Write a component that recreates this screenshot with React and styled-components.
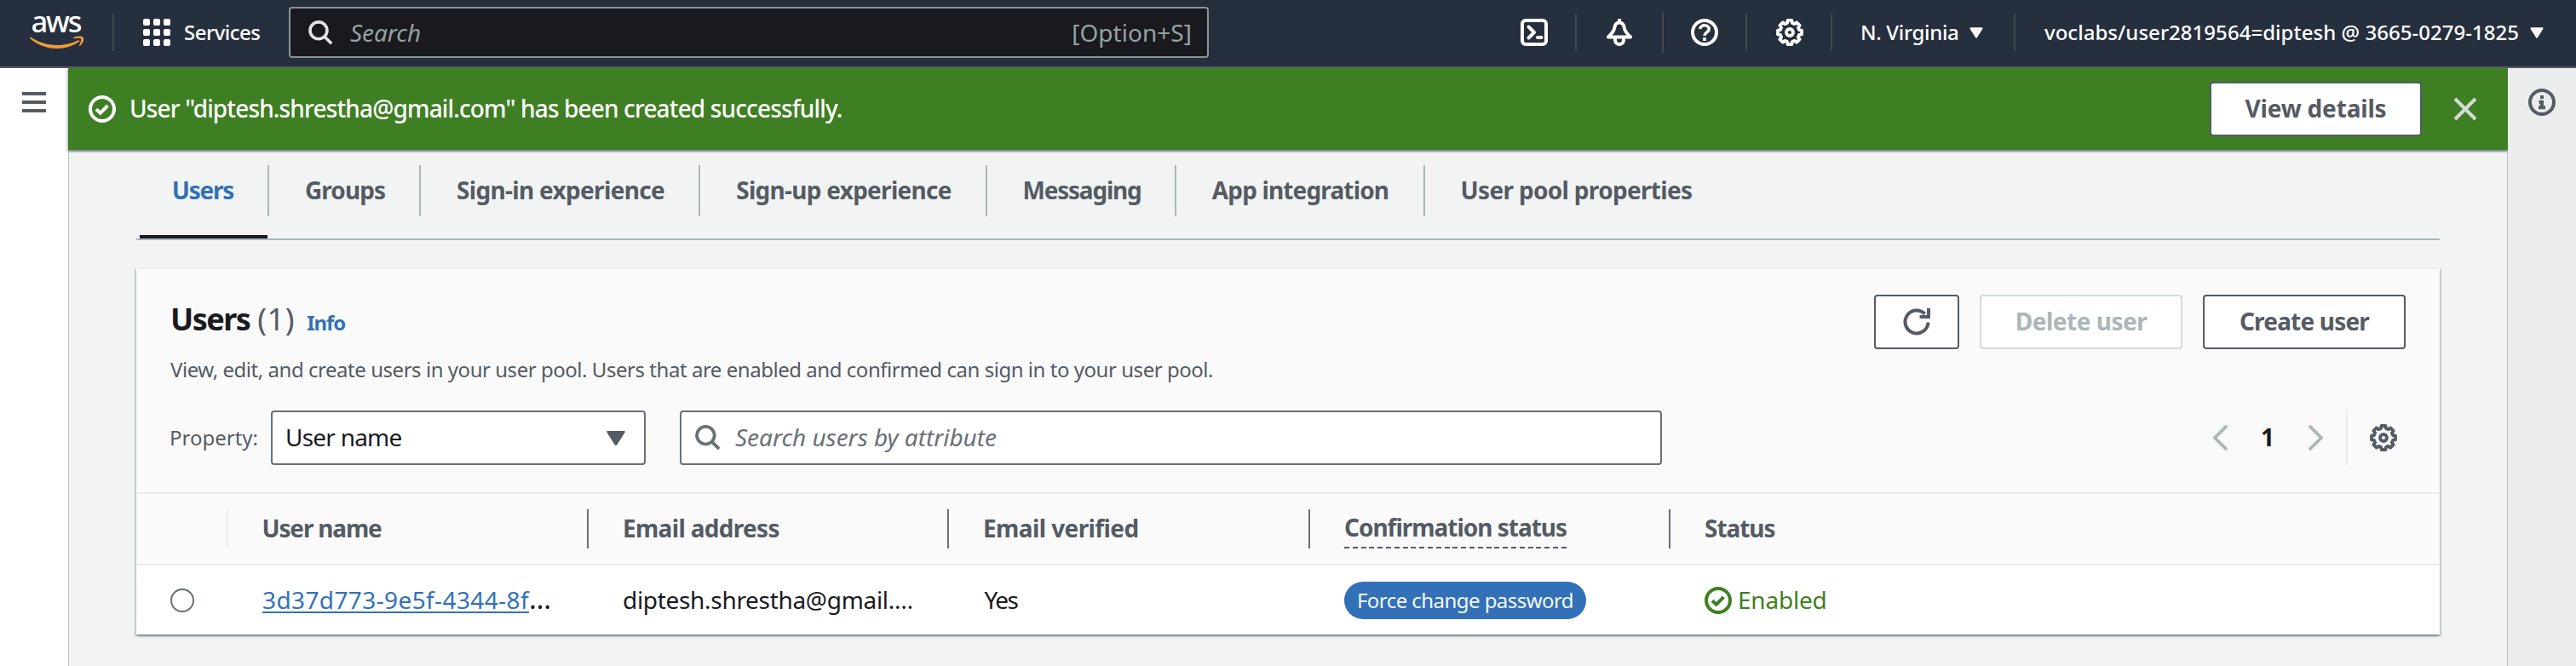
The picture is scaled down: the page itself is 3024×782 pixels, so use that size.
import React from "react";
import styled, { createGlobalStyle } from "styled-components";

const c = {
  nav: "#262f3e", ink: "#1a191f", grey: "#545b64", mid: "#687078", line: "#aab7b8",
  soft: "#eaeded", blue: "#3271b7", green: "#3f7f23", page: "#f1f4f3",
};

const GlobalStyle = createGlobalStyle`
  * { box-sizing: border-box; }
  body { margin: 0; background: ${c.page}; font-family: "Noto Sans", "Open Sans", sans-serif; color: ${c.ink}; }
  svg { display: block; flex: none; }
`;

const Text = styled.span`
  display: block;
  white-space: pre;
  font-size: ${(p) => p.$size || 28}px;
  line-height: ${(p) => p.$lh || 40}px;
  font-weight: ${(p) => p.$weight || 400};
  font-style: ${(p) => (p.$italic ? "italic" : "normal")};
  letter-spacing: ${(p) => p.$ls || 0}px;
  color: ${(p) => p.$color || "inherit"};
  margin-left: ${(p) => p.$x || 0}px;
  padding-bottom: ${(p) => (p.$up || 0) * 2}px;
`;

/* Top navigation */
const Header = styled.header`
  height: 80px; padding: 0 38px 2px 34px; background: ${c.nav};
  border-bottom: 2px solid ${c.grey}; display: flex; align-items: center; color: #fff;
`;
const NavDivider = styled.i`
  flex: none; width: 2px; height: ${(p) => (p.$tall ? 48 : 44)}px; background: #414750;
  margin: 0 ${(p) => p.$r}px 0 ${(p) => p.$l}px;
`;
const GridIcon = styled.div`
  display: grid; grid-template-columns: repeat(3, 8px); grid-auto-rows: 8px; gap: 4px; margin-right: 16px;
  i { background: #fff; border-radius: 2px; }
`;
const NavSearch = styled.div`
  width: 1080px; height: 60px; margin-left: auto; padding: 0 18px 0 21px;
  border: 2px solid #879596; border-radius: 4px; background: ${c.ink}; display: flex; align-items: center;
`;
const NavLeft = styled.div`display: flex; align-items: center; width: 1385px;`;
const NavRight = styled.div`display: flex; align-items: center; flex: 1; padding-left: 366px;`;
const Region = styled.div`display: flex; align-items: center; justify-content: space-between; width: 144px;`;
const Spacer = styled.div`flex: 1;`;

/* Page shell */
const Shell = styled.div`display: grid; grid-template-columns: 80px 1fr 80px; height: 702px;`;
const LeftRail = styled.aside`background: #fff; padding: 28px 26px;`;
const RightRail = styled.aside`background: #ebedec; padding: 24px;`;
const Burger = styled.div`
  display: grid; gap: 6px;
  i { width: 28px; height: 4px; background: ${c.grey}; }
`;
const Main = styled.main`box-shadow: inset 1px 0 0 #bcc3c4, inset -1px 0 0 #bcc3c4;`;
const raised = `box-shadow: 0 2px 2px 0 rgba(0,28,36,.3), 2px 2px 2px 0 rgba(0,28,36,.15), -2px 2px 2px 0 rgba(0,28,36,.15);`;
const Banner = styled.div`
  height: 96px; background: ${c.green}; color: #fff; display: flex; align-items: center; padding: 0 36px 0 24px;
  ${raised}
`;
const Content = styled.div`padding: 18px 80px 0;`;

/* Tabs */
const TabBar = styled.nav`display: flex; height: 88px; padding-left: 4px; border-bottom: 2px solid ${c.line};`;
const Tab = styled.div`
  width: ${(p) => p.$w}px; display: flex; flex-direction: column; justify-content: space-between;
  color: ${(p) => (p.$on ? c.blue : c.grey)};
`;
const TabLabel = styled.div`
  height: 60px; display: flex; align-items: center; justify-content: center;
  border-right: 2px solid ${(p) => (p.$last ? "transparent" : c.line)};
`;
const TabMark = styled.i`height: 4px; margin-right: 2px; background: ${(p) => (p.$on ? c.ink : "transparent")};`;

/* Card */
const Card = styled.section`margin-top: 32px; background: #fff; border-top: 2px solid ${c.soft}; ${raised}`;
const CardHead = styled.div`background: #fafafa; padding: 30px 40px 32px; border-bottom: 2px solid ${c.soft};`;
const TitleRow = styled.div`display: flex; height: 64px; margin-bottom: 6px;`;
const Title = styled.div`display: flex; align-items: baseline; flex: 1; height: 58px;`;
const FilterRow = styled.div`display: flex; align-items: center; height: 64px; margin-top: 30px;`;
const Button = styled.button`
  width: ${(p) => p.$w}px; height: 64px; margin: 0 0 0 ${(p) => p.$gap || 0}px; padding: 0; font-family: inherit;
  display: flex; align-items: center; justify-content: center; background: #fff;
  border: 2px solid ${(p) => (p.disabled ? "#d5dbdb" : c.grey)}; border-radius: 4px;
  color: ${(p) => (p.disabled ? c.line : c.grey)};
`;
const CloseButton = styled.button`
  margin: 0 0 0 37px; padding: 0; border: 0; background: none; color: #d5dbdb;
`;
const Field = styled.div`
  width: ${(p) => p.$w}px; height: 64px; margin-left: ${(p) => p.$gap}px; padding: 0 ${(p) => p.$pr || 0}px 0 ${(p) => p.$pl}px;
  background: #fff; border: 2px solid ${c.mid}; border-radius: 4px;
  display: flex; align-items: center; justify-content: space-between;
`;
const Inline = styled.div`display: flex; align-items: center; gap: ${(p) => p.$gap || 0}px;`;
const Pager = styled.div`display: flex; align-items: center; margin-left: auto; padding-right: 10px;`;
const PageNumber = styled(Text)`margin: 0 39px 0 38px;`;
const PagerLine = styled.i`width: 2px; height: 64px; background: ${c.soft}; margin: 0 26px 0 25px;`;

/* Table */
const Row = styled.div`
  display: grid; grid-template-columns: 108px 423px 423px 424px 423px 1fr; align-items: center;
  height: ${(p) => (p.$head ? 84 : 81)}px;
  background: ${(p) => (p.$head ? "#fafafa" : "#fff")};
  border-bottom: ${(p) => (p.$head ? `2px solid ${c.soft}` : "0")};
`;
const Cell = styled.div`
  height: 46px; padding-left: 40px; display: flex; align-items: center;
  border-right: 2px solid ${(p) => p.$line || "transparent"};
`;
const Radio = styled.i`width: 28px; height: 28px; border: 2px solid ${c.mid}; border-radius: 50%; background: #fff;`;
const Link = styled(Text)`
  color: ${c.blue}; text-decoration: underline; text-decoration-thickness: 2px;
  text-underline-offset: 3px; text-decoration-skip-ink: none;
`;
const Hint = styled.div`
  height: 41px; margin-top: 5px;
  background: repeating-linear-gradient(90deg, ${c.grey} 0 6px, transparent 6px 9.8px) left bottom / 100% 2px no-repeat;
`;
const Badge = styled.div`
  width: 284px; height: 44px; border-radius: 22px; background: ${c.blue}; color: #f5f8fb;
  display: flex; align-items: center; justify-content: center;
`;

/* Icons */
const Svg = ({ size = 32, sw = 4, children, ...rest }) => (
  <svg width={size} height={size} viewBox="0 0 32 32" fill="none" stroke="currentColor" strokeWidth={sw} {...rest}>{children}</svg>
);

const gearPath = (() => {
  const pts = [];
  for (let i = 0; i < 8; i++) {
    [[-15, 11.4], [-10, 14.2], [10, 14.2], [15, 11.4]].forEach(([d, r]) => {
      const a = ((i * 45 + d) * Math.PI) / 180;
      pts.push(`${(16 + r * Math.sin(a)).toFixed(2)} ${(16 - r * Math.cos(a)).toFixed(2)}`);
    });
  }
  return `M${pts.join("L")}Z`;
})();
const Gear = (p) => <Svg sw={3.8} strokeLinejoin="round" {...p}><path d={gearPath} /><circle cx="16" cy="16" r="4" /></Svg>;
const CheckCircle = (p) => <Svg {...p}><circle cx="16" cy="16" r="14" /><path d="M9 16.2l4.8 4.6 8.6-8.8" /></Svg>;
const SearchIcon = ({ size = 28, ...p }) => (
  <Svg size={size} {...p}><circle cx="13.2" cy="13" r="11" /><path d="M21 21l9 9" /></Svg>
);
const Caret = () => (
  <svg width="16" height="13" viewBox="0 0 16 12" preserveAspectRatio="none" fill="currentColor" stroke="currentColor" strokeWidth="2" strokeLinejoin="round">
    <path d="M1.5 1.2h13L8 10.8z" />
  </svg>
);
const SelectCaret = () => (
  <svg width="22" height="17" viewBox="0 0 22 17" fill={c.grey}>
    <path d="M1.5 0h19c1.2 0 1.6 1 .9 2L12.5 16c-.8 1.300-2.200 1.300-3 0L.6 2C-.1 1 .3 0 1.500 0z" />
  </svg>
);
const Chevron = ({ flip }) => (
  <svg width="20" height="32" viewBox="0 0 20 32" fill="none" stroke={c.line} strokeWidth="3.8">
    <path d={flip ? "M2 2l14 14-14 14" : "M18 2L4 16l14 14"} />
  </svg>
);
const AwsLogo = () => (
  <svg width="66" height="76" viewBox="34 0 66 76">
    <text x="36.5" y="38" fill="#fff" fontSize="34.5" fontWeight="500" textLength="60" lengthAdjust="spacing">aws</text>
    <g fill="#ef9b38">
      <path d="M36 43.5C44 49 55 53 67 53c9 0 18-2.500 24.500-5.500 1.500-.7 2.500.7 1.300 1.500C86 54 76 57 67 57c-13 0-24-5-31.500-11.800-.7-.8-.5-2.200.5-1.700z" />
      <path d="M97.500 43.800c-1.500-2-8.500-1.300-11 .2-1 .8-.5 1.300.5 1.200 2.500-.4 7-.9 8 .4s-1 5.400-2 7.600c-.3.800.4 1.100 1.200.4 3.800-3.100 4.800-8.100 3.300-9.800z" />
    </g>
  </svg>
);

const tabs = [
  ["Users", 152, -1.24, -2], ["Groups", 178, -0.93, 2], ["Sign-in experience", 328, -0.68, 2], ["Sign-up experience", 337, -0.73, 2],
  ["Messaging", 222, -1.22, 2], ["App integration", 292, -0.85, 1], ["User pool properties", 357, -0.68, 0],
];

export default function App() {
  return (
    <>
      <GlobalStyle />
      <Header>
        <NavLeft>
          <AwsLogo />
          <NavDivider $l={32} $r={34} />
          <GridIcon>{Array.from({ length: 9 }, (_, i) => <i key={i} />)}</GridIcon>
          <Text $size={24} $weight={500} $ls={-0.5}>Services</Text>
          <NavSearch>
            <SearchIcon color="#dfe3e3" size={29} />
            <Text $italic $color="#95a1a2" $ls={-0.06} $x={20}>Search</Text>
            <Spacer />
            <Text $color="#95a1a2" $ls={0.03}>[Option+S]</Text>
          </NavSearch>
        </NavLeft>
        <NavRight>
          <Svg><rect x="2" y="2" width="28" height="28" rx="4" /><path d="M9.500 9.500L16 16l-6.500 6.500M20 22h4.500" strokeLinecap="round" strokeLinejoin="round" /></Svg>
          <NavDivider $l={32} $r={34} />
          <Svg strokeLinejoin="round">
            <path d="M16 4.500C11.500 4.500 10.500 8 10 11.500 9.500 15 6 18.500 3 21.500h26c-3-3-6.500-6.500-7-10C21.500 8 20.500 4.500 16 4.500z" />
            <path d="M16 0v5M11 23v2a5 5 0 0 0 10 0v-2" />
          </Svg>
          <NavDivider $tall $l={34} $r={32} />
          <Svg><circle cx="16" cy="16" r="14" /><path d="M10.800 12.200c.3-6 10.400-5.800 10.400 0 0 3.800-5.200 3.600-5.200 7.800M16 22v4" strokeWidth="3.600" /></Svg>
          <NavDivider $l={32} $r={34} />
          <Gear />
          <NavDivider $l={32} $r={33} />
          <Region>
            <Text $size={24} $weight={500} $ls={-0.34}>N. Virginia</Text>
            <Caret />
          </Region>
          <NavDivider $l={36} $r={34} />
          <Text $size={24} $weight={500} $ls={0.03}>voclabs/user2819564=diptesh @ 3665-0279-1825</Text>
          <Spacer />
          <Caret />
        </NavRight>
      </Header>
      <Shell>
        <LeftRail><Burger><i /><i /><i /></Burger></LeftRail>
        <Main>
          <Banner>
            <CheckCircle />
            <Text $weight={500} $ls={-0.86} $x={16} $up={1}>User "diptesh.shrestha@gmail.com" has been created successfully.</Text>
            <Spacer />
            <Button $w={249}><Text $weight={700} $ls={-0.18} $up={1}>View details</Text></Button>
            <CloseButton aria-label="Dismiss">
              <svg width="28" height="28" viewBox="0 0 28 28" fill="none" stroke="currentColor" strokeWidth="4"><path d="M2 2l24 24M26 2L2 26" /></svg>
            </CloseButton>
          </Banner>
          <Content>
            <TabBar>
              {tabs.map(([label, w, ls, x], i) => (
                <Tab key={label} $w={w} $on={i === 0}>
                  <TabLabel $last={i === 6}><Text $weight={700} $ls={ls} $x={x} $up={1}>{label}</Text></TabLabel>
                  <TabMark $on={i === 0} />
                </Tab>
              ))}
            </TabBar>
            <Card>
              <CardHead>
                <TitleRow>
                  <Title>
                    <Text $size={36} $lh={58} $weight={700} $ls={-1.55}>Users</Text>
                    <Text $size={36} $lh={58} $color={c.grey} $ls={0.6} $x={9}>(1)</Text>
                    <Text $size={24} $weight={700} $color={c.blue} $ls={-1.1} $x={14}>Info</Text>
                  </Title>
                  <Button $w={100}>
                    <Svg><path d="M29.500 16.500A13.500 13.500 0 1 1 25.700 6.500" /><path d="M30 0v10H19.500" /></Svg>
                  </Button>
                  <Button $w={238} $gap={24} disabled><Text $weight={700} $ls={-0.5} $up={1}>Delete user</Text></Button>
                  <Button $w={238} $gap={24}><Text $weight={700} $ls={-0.82} $up={1}>Create user</Text></Button>
                </TitleRow>
                <Text $size={24} $lh={36} $color={c.grey} $ls={-0.46}>View, edit, and create users in your user pool. Users that are enabled and confirmed can sign in to your user pool.</Text>
                <FilterRow>
                  <Text $size={24} $color={c.grey} $x={-1}>Property:</Text>
                  <Field $w={440} $gap={15} $pl={15} $pr={22}>
                    <Text $ls={-0.78} $up={1}>User name</Text>
                    <SelectCaret />
                  </Field>
                  <Field $w={1153} $gap={40} $pl={16}>
                    <Inline><SearchIcon color={c.mid} size={30} /><Text $italic $color={c.mid} $ls={-0.05} $x={17} $up={1}>Search users by attribute</Text></Inline>
                  </Field>
                  <Pager>
                    <Chevron />
                    <PageNumber $weight={700} $up={1}>1</PageNumber>
                    <Chevron flip />
                    <PagerLine />
                    <Gear color={c.grey} />
                  </Pager>
                </FilterRow>
              </CardHead>
              <Row $head>
                <Cell $line={c.soft} />
                <Cell $line={c.mid}><Text $weight={700} $color={c.grey} $ls={-1.18} $x={-0.5} $up={1}>User name</Text></Cell>
                <Cell $line={c.mid}><Text $weight={700} $color={c.grey} $ls={-0.68} $up={1}>Email address</Text></Cell>
                <Cell $line={c.mid}><Text $weight={700} $color={c.grey} $ls={-0.6} $up={1}>Email verified</Text></Cell>
                <Cell $line={c.mid}><Hint><Text $weight={700} $color={c.grey} $ls={-1.02} $lh={32}>Confirmation status</Text></Hint></Cell>
                <Cell><Text $weight={700} $color={c.grey} $ls={-1.04} $up={1}>Status</Text></Cell>
              </Row>
              <Row>
                <Cell><Radio /></Cell>
                <Cell><Link $ls={0.39} $up={1}>3d37d773-9e5f-4344-8f</Link><Text $size={33} $up={1.5}>…</Text></Cell>
                <Cell><Text $ls={-0.31} $up={1}>diptesh.shrestha@gmail.…</Text></Cell>
                <Cell><Text $ls={-1.62} $x={1.5} $up={1}>Yes</Text></Cell>
                <Cell><Badge><Text $size={24} $ls={-0.55}>Force change password</Text></Badge></Cell>
                <Cell><Inline $gap={7}><CheckCircle color={c.green} /><Text $color={c.green} $ls={-0.2} $up={1}>Enabled</Text></Inline></Cell>
              </Row>
            </Card>
          </Content>
        </Main>
        <RightRail>
          <Svg color={c.grey}><circle cx="16" cy="16" r="14" /><path d="M16 8v4M12.500 15.800H16V24M12 22.200h8" /></Svg>
        </RightRail>
      </Shell>
    </>
  );
}
